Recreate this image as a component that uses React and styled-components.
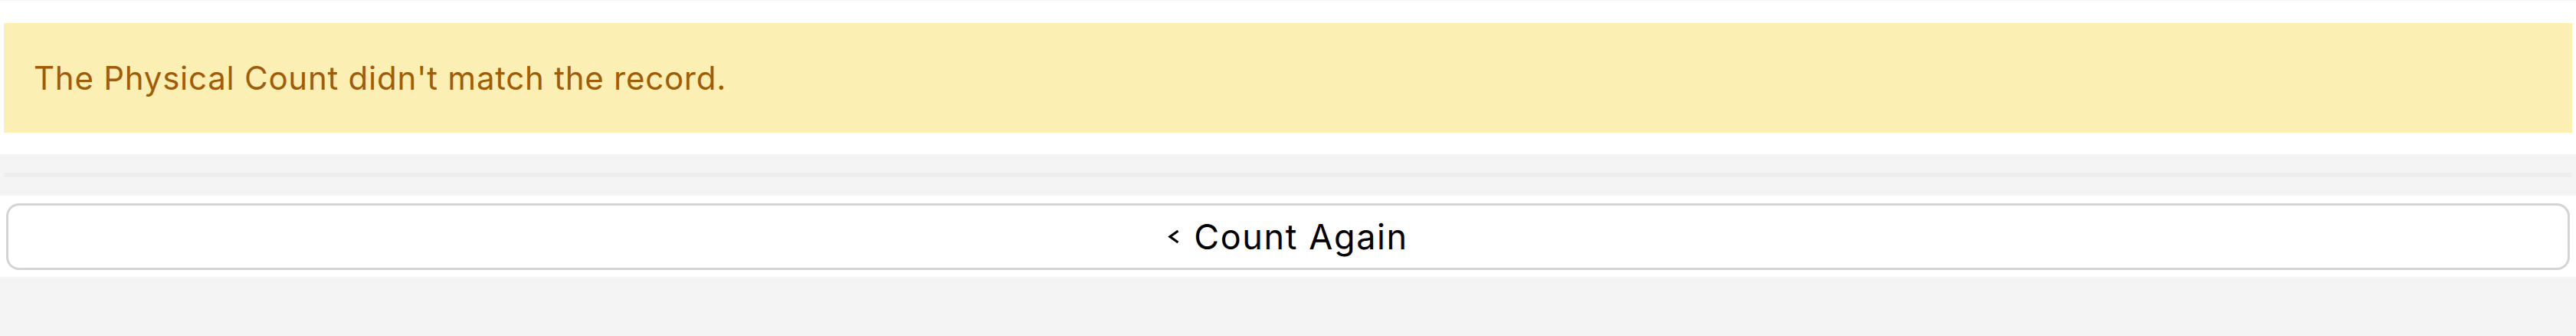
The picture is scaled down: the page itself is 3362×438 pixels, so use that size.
import React from "react";
import styled, { createGlobalStyle } from "styled-components";

const GlobalStyle = createGlobalStyle`
  html, body { margin: 0; padding: 0; }
  body {
    background: #f4f4f4;
    font-family: Inter, "Noto Sans", sans-serif;
    -webkit-font-smoothing: antialiased;
  }
`;

const Page = styled.div`
  display: flex;
  flex-direction: column;
  padding-top: 1px;
  background: #f4f4f4;
  min-height: 437px;
`;

const AlertCard = styled.section`
  background: #ffffff;
  padding: 29px 5px 28px;
`;

const Alert = styled.div`
  display: flex;
  align-items: center;
  height: 143px;
  box-sizing: border-box;
  padding: 0 0 0 39px;
  background: #fcefb4;
  color: #a15c07;
  font-size: 42px;
  letter-spacing: 0.75px;
  line-height: 1;
`;

const DividerBand = styled.div`
  background: #f4f4f4;
  padding: 24px 5px;
`;

const DividerLine = styled.div`
  height: 6px;
  background: #eeeeee;
`;

const ActionBar = styled.div`
  background: #ffffff;
  padding: 10px 8px 9px;
`;

const Button = styled.button`
  display: flex;
  align-items: center;
  justify-content: center;
  gap: 18px;
  width: 100%;
  height: 87px;
  box-sizing: border-box;
  margin: 0;
  padding: 0;
  background: #ffffff;
  border: 3px solid #d4d4d8;
  border-radius: 17px;
  color: #000000;
  font-family: Inter, "Noto Sans", sans-serif;
  font-size: 45px;
  letter-spacing: 1.6px;
  line-height: 1;
  cursor: pointer;
`;

const Chevron = styled.svg`
  width: 16px;
  height: 19px;
  flex: none;
  margin-top: 0;
`;

const Label = styled.span`
  display: block;
`;

export default function App() {
  return (
    <>
      <GlobalStyle />
      <Page>
        <AlertCard>
          <Alert>The Physical Count didn't match the record.</Alert>
        </AlertCard>
        <DividerBand>
          <DividerLine />
        </DividerBand>
        <ActionBar>
          <Button type="button">
            <Chevron viewBox="0 0 16 19" fill="none">
              <polyline
                points="13.5,2 3,9.5 13.5,17"
                stroke="#000"
                strokeWidth="3.2"
                strokeLinecap="butt"
                strokeLinejoin="miter"
              />
            </Chevron>
            <Label>Count Again</Label>
          </Button>
        </ActionBar>
      </Page>
    </>
  );
}
